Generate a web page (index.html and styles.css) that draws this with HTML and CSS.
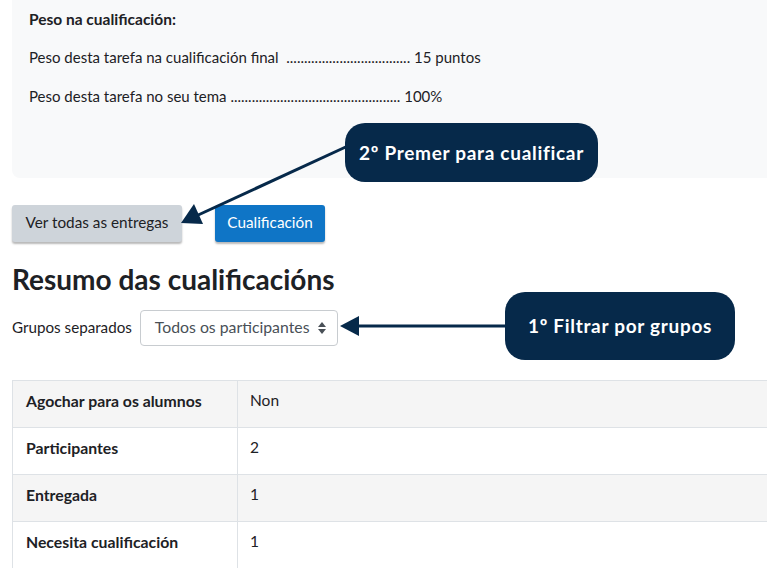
FILE: index.html
```html
<!DOCTYPE html>
<html lang="gl">
<head>
<meta charset="utf-8">
<title>Resumo das cualificacións</title>
<link rel="stylesheet" href="styles.css">
</head>
<body>
<div class="page">
  <div class="panel">
    <p class="strong">Peso na cualificación:</p>
    <p>Peso desta tarefa na cualificación final&nbsp; ................................... 15 puntos</p>
    <p>Peso desta tarefa no seu tema ................................................ 100%</p>
  </div>

  <div class="buttons">
    <span class="btn btn-secondary">Ver todas as entregas</span>
    <span class="btn btn-primary">Cualificación</span>
  </div>

  <h2 class="heading">Resumo das cualificacións</h2>

  <div class="groups">
    <span class="groups-label">Grupos separados</span>
    <span class="select">Todos os participantes
      <svg class="caret" width="8" height="12" viewBox="0 0 8 12"><polygon points="4,0 8,5 0,5" fill="#495057"/><polygon points="0,7 8,7 4,12" fill="#495057"/></svg>
    </span>
  </div>

  <table class="summary">
    <tr class="odd"><th>Agochar para os alumnos</th><td>Non</td></tr>
    <tr><th>Participantes</th><td>2</td></tr>
    <tr class="odd"><th>Entregada</th><td>1</td></tr>
    <tr><th>Necesita cualificación</th><td>1</td></tr>
  </table>

  <svg class="arrows" width="767" height="568" viewBox="0 0 767 568">
    <line x1="350" y1="145" x2="196" y2="216" stroke="#06294a" stroke-width="3"/>
    <polygon points="181,223 194,204 203,224" fill="#06294a"/>
    <line x1="506" y1="326" x2="356" y2="326" stroke="#06294a" stroke-width="3"/>
    <polygon points="340,326 359,316 359,336" fill="#06294a"/>
  </svg>

  <div class="callout callout-2">2º Premer para cualificar</div>
  <div class="callout callout-1">1º Filtrar por grupos</div>
</div>
</body>
</html>
```

FILE: styles.css
```css
html, body {
  margin: 0;
  padding: 0;
  background: #ffffff;
}
body {
  font-family: Lato, "Noto Sans", sans-serif;
  font-size: 15px;
  color: #1d2125;
  overflow: hidden;
  width: 767px;
  height: 568px;
}
.page {
  position: relative;
  width: 767px;
  height: 568px;
  overflow: hidden;
}
.panel {
  margin-left: 12px;
  height: 178px;
  box-sizing: border-box;
  padding: 8px 17px 0;
  background: #f8f9fa;
  border-bottom-left-radius: 8px;
}
.panel p {
  margin: 0 0 16px;
  line-height: 22px;
  font-size: 15px;
}
.panel p + p {
  margin-bottom: 17px;
}
.panel .strong {
  font-weight: 700;
  font-size: 15.5px;
}
.buttons {
  display: flex;
  gap: 33px;
  margin: 27px 0 0 12px;
}
.btn {
  display: flex;
  align-items: center;
  justify-content: center;
  height: 37px;
  box-sizing: border-box;
  border-radius: 3px;
  font-size: 15.3px;
  padding-bottom: 4px;
  box-shadow: 0 2px 2px rgba(0, 0, 0, 0.28);
}
.btn-secondary {
  width: 170px;
  background: #ced4da;
  color: #1d2125;
}
.btn-primary {
  width: 110px;
  background: #0f75c6;
  color: #ffffff;
}
.heading {
  margin: 20px 0 0 12px;
  font-size: 28px;
  line-height: 34px;
  font-weight: 700;
  color: #1d2125;
}
.groups {
  display: flex;
  align-items: center;
  gap: 8px;
  margin: 14px 0 0 12px;
}
.groups-label {
  font-size: 15.2px;
  padding-bottom: 3px;
}
.select {
  display: flex;
  align-items: center;
  justify-content: space-between;
  width: 198px;
  height: 36px;
  box-sizing: border-box;
  padding: 0 11px 4px 14px;
  border: 1px solid #c8ccd0;
  border-radius: 4px;
  color: #495057;
  font-size: 15.8px;
}
.caret {
  display: block;
  margin-top: 4px;
}
.summary {
  margin: 34px 0 0 12px;
  width: 800px;
  border-collapse: collapse;
  font-size: 15.5px;
}
.summary th,
.summary td {
  height: 47px;
  box-sizing: border-box;
  border: 1px solid #dee2e6;
  padding: 0 13px 8px;
  text-align: left;
  vertical-align: middle;
}
.summary td {
  padding-left: 12px;
}
.summary th {
  width: 225px;
  font-weight: 700;
  font-size: 15.8px;
}
.summary tr.odd {
  background: #f5f5f5;
}
.arrows {
  position: absolute;
  left: 0;
  top: 0;
  pointer-events: none;
}
.callout {
  position: absolute;
  display: flex;
  align-items: center;
  justify-content: center;
  background: #06294a;
  color: #ffffff;
  font-weight: 700;
  font-size: 19px;
  border-radius: 20px;
  letter-spacing: 0.7px;
  padding-bottom: 1px;
  box-sizing: border-box;
}
.callout-2 {
  left: 345px;
  top: 123px;
  width: 253px;
  height: 59px;
}
.callout-1 {
  left: 505px;
  top: 292px;
  width: 230px;
  height: 68px;
}
```
